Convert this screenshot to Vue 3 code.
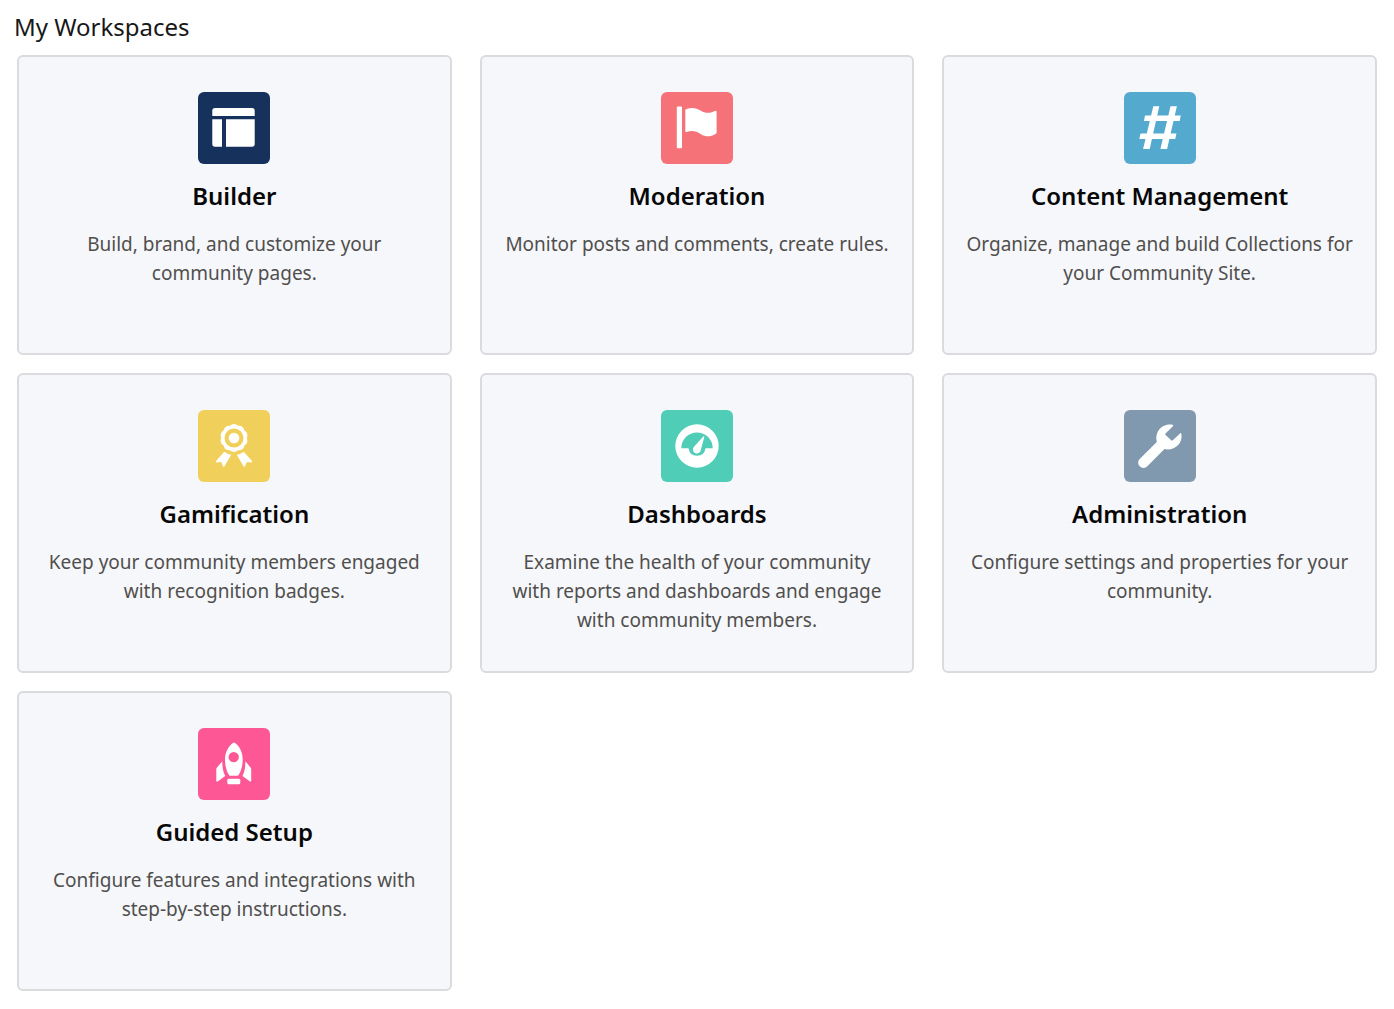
<script setup>
  const workspaces = [
    { id: "builder", name: "Builder", description: "Build, brand, and customize your community pages." },
    { id: "moderation", name: "Moderation", description: "Monitor posts and comments, create rules." },
    { id: "content", name: "Content Management", description: "Organize, manage and build Collections for your Community Site." },
    { id: "gamification", name: "Gamification", description: "Keep your community members engaged with recognition badges." },
    { id: "dashboards", name: "Dashboards", description: "Examine the health of your community with reports and dashboards and engage with community members." },
    { id: "administration", name: "Administration", description: "Configure settings and properties for your community." },
    { id: "setup", name: "Guided Setup", description: "Configure features and integrations with step-by-step instructions." },
  ];
</script>

<template>
  <main class="workspaces">
    <h1 class="pageTitle">My Workspaces</h1>

    <div class="tiles">
      <a v-for="item in workspaces" :key="item.id" class="tile" :href="`#${ item.id }`">
        <svg class="icon" :class="item.id" viewBox="0 0 72 72" aria-hidden="true">
          <g v-if="item.id === 'builder'">
            <path d="M17 16h37q2.700 0 2.700 2.700V24H14.300v-5.300Q14.300 16 17 16z" />
            <path d="M14.300 27.200H24v27.500h-7q-2.700 0-2.700-2.700z" />
            <path d="M28 27.200h28.700V52q0 2.700-2.700 2.700H28z" />
          </g>
          <g v-else-if="item.id === 'moderation'">
            <rect x="15.800" y="14.500" width="5.200" height="41.700" rx="1" />
            <path d="M24.300 18.200Q24.300 17.500 25 17.200C31 14.800 36 16.300 40 18.800C45 22 49 21 54 18.900Q55.600 18.300 55.600 19.800V40.500Q55.600 41.300 54.900 41.700C49 45.200 44.500 44.900 40 42.200C35 39 31 38.300 25.600 40Q24.300 40.400 24.300 39z" />
          </g>
          <g v-else-if="item.id === 'content'">
            <path d="M29.300 14.300H35.300L25.700 57H19.100zM46.500 14.300H52.900L43.100 57H36.400z" />
            <path d="M21 23.400H56.800L55.700 28.900H19.900zM16.500 41.500H52.400L51.300 47H15.300z" />
          </g>
          <g v-else-if="item.id === 'gamification'">
            <path fill-rule="evenodd" d="M40 15.800A5.500 5.500 0 0 1 46.400 20.500A5.500 5.500 0 0 1 48.800 28A5.500 5.500 0 0 1 46.400 35.500A5.500 5.500 0 0 1 40 40.200A5.500 5.500 0 0 1 32 40.200A5.500 5.500 0 0 1 25.600 35.500A5.500 5.500 0 0 1 23.200 28A5.500 5.500 0 0 1 25.600 20.500A5.500 5.500 0 0 1 32 15.800A5.500 5.500 0 0 1 40 15.800zM36 18.500a9.500 9.500 0 1 0 0 19a9.500 9.500 0 1 0 0-19z" />
            <circle cx="36" cy="28" r="5.300" />
            <path d="M26.300 41.700Q29.300 44.300 33.300 44.700L26.300 56.500Q25.400 57.500 24.900 56L23.200 52.100L18.700 52.600Q17.200 52.500 18 51.100z" />
            <path d="M45.700 41.700Q42.700 44.300 38.700 44.700L45.700 56.500Q46.600 57.500 47.100 56L48.800 52.100L53.300 52.600Q54.800 52.500 54 51.100z" />
          </g>
          <g v-else-if="item.id === 'dashboards'">
            <path fill-rule="evenodd" d="M36 14.300a21.700 21.700 0 1 1 0 43.400a21.700 21.700 0 1 1 0-43.400zM20.300 38.200H27.500Q28.700 45.800 36 45.800Q43.300 45.800 44.500 38.200H51.700A15.700 15.700 0 1 0 20.300 38.200z" />
            <path d="M42.300 26.500Q43.600 25.800 43.200 27.400L39.900 39.500A4 4 0 1 1 33 36.800z" />
          </g>
          <g v-else-if="item.id === 'administration'">
            <path d="M48.600 14.700Q49.900 15.200 48.900 16.200L41.500 23.400Q40.800 24.200 41.600 25L47.200 30.200Q48 31 48.800 30.200L56 23.400Q57 22.500 57.400 23.900C58.800 32.500 52.100 39.300 43.600 39.600L40.500 39.100L23.300 56.200A4.900 4.900 0 0 1 15.700 56.200A4.900 4.900 0 0 1 15.700 49.100L33 31.800C30 22.500 38 12.500 48.600 14.700z" />
          </g>
          <g v-else>
            <path fill-rule="evenodd" d="M34.900 15Q36 14.200 37.100 15C42.200 19 44.700 25 44.700 31.500C44.700 37.500 43.300 42.500 40.800 46.800Q40.300 47.700 39.300 47.700H32.300Q31.300 47.700 30.800 46.800C28.300 42.500 27 37.500 27 31.500C27 25 29.800 19 34.900 15zM35.700 23.900a5.200 5.200 0 1 0 0 10.400a5.200 5.200 0 1 0 0-10.400z" />
            <path d="M24.300 33.200C24.300 39 25 43.500 27.200 48L20 53.300Q18.300 54.500 18.300 52.600V41.200Q18.300 40.200 19 39.500zM47.400 33.200C47.400 39 46.700 43.500 44.500 48L51.700 53.300Q53.200 54.500 53.200 52.600V41.200Q53.200 40.200 52.500 39.500z" />
            <rect x="29.300" y="50.700" width="13" height="5.600" rx="1.500" />
          </g>
        </svg>
        <h2 class="name">{{ item.name }}</h2>
        <p class="description">{{ item.description }}</p>
      </a>
    </div>
  </main>
</template>

<style>
  body {
    background-color: #fff;
  }
</style>

<style scoped>
  .workspaces {
    padding: 11px 17px 18px 17px;
    font-family: "Noto Sans", "Open Sans", sans-serif;
  }

  .pageTitle {
    margin: 0 0 12px -3px;
    font-size: 24px;
    line-height: 32px;
    font-weight: 400;
    color: #181818;
  }

  .tiles {
    display: grid;
    grid-template-columns: repeat(3, minmax(0, 1fr));
    grid-auto-rows: minmax(300px, auto);
    gap: 18px 28px;
  }

  .tile {
    display: flex;
    flex-direction: column;
    align-items: center;
    padding: 35px 21px;
    border: 2px solid #d9dbdd;
    border-radius: 6px;
    background-color: #f5f7fb;
    text-align: center;
    text-decoration: none;
  }

  .icon {
    width: 72px;
    height: 72px;
    border-radius: 6px;
    fill: #fff;
  }

  .builder {
    background-color: #16325c;
  }

  .moderation {
    background-color: #f67279;
  }

  .content {
    background-color: #54a9cf;
  }

  .gamification {
    background-color: #f0cf5b;
  }

  .dashboards {
    background-color: #50cdb7;
  }

  .administration {
    background-color: #8199af;
  }

  .setup {
    background-color: #fd5796;
  }

  .name {
    margin: 15px 0 0;
    font-size: 24px;
    line-height: 34px;
    font-weight: 600;
    color: #080707;
  }

  .description {
    margin: 17px 0 0;
    font-size: 19px;
    line-height: 29px;
    color: #514f4d;
  }
</style>
